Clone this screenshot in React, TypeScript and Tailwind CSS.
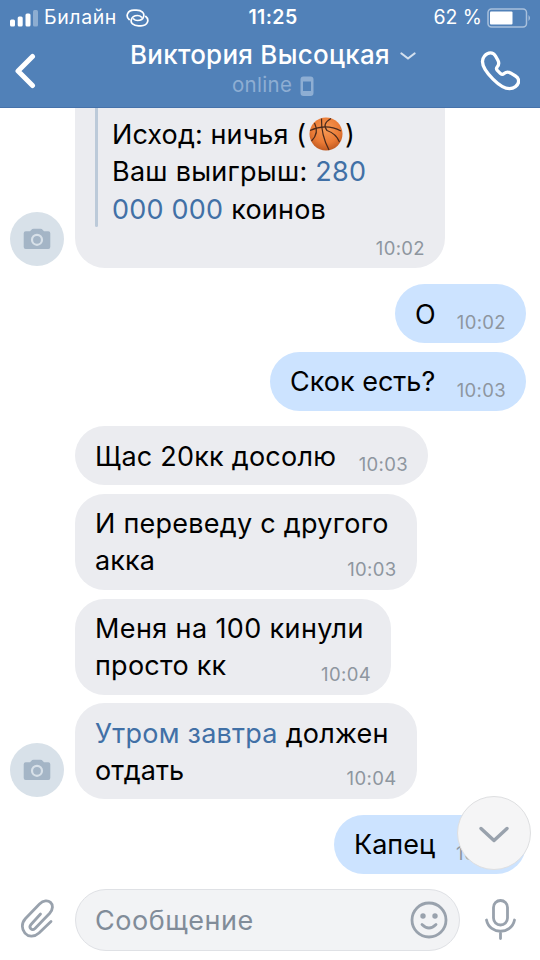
import type { ReactNode } from "react";

type Line = { text: ReactNode; className?: string };

type Message = {
  own?: boolean;
  avatar?: boolean;
  time: string;
  size: string;
  lines: Line[];
};

const messages: Message[] = [
  {
    own: true,
    time: "10:02",
    size: "mt-4 w-[131px] h-[59px]",
    lines: [{ text: "О" }],
  },
  {
    own: true,
    time: "10:03",
    size: "mt-[8.5px] w-[256px] h-[59px]",
    lines: [{ text: "Скок есть?" }],
  },
  {
    time: "10:03",
    size: "mt-[15.5px] w-[353px] h-[59px]",
    lines: [{ text: "Щас 20кк досолю", className: "tracking-[0.22px]" }],
  },
  {
    time: "10:03",
    size: "mt-[8.5px] w-[341.5px] h-[96px]",
    lines: [
      { text: "И переведу с другого", className: "tracking-[0.25px]" },
      { text: "акка", className: "tracking-[0.1px]" },
    ],
  },
  {
    time: "10:04",
    size: "mt-[9px] w-[316px] h-[96px]",
    lines: [
      { text: "Меня на 100 кинули", className: "tracking-[0.38px]" },
      { text: "просто кк", className: "tracking-[0.25px]" },
    ],
  },
  {
    avatar: true,
    time: "10:04",
    size: "mt-[8.5px] w-[341.5px] h-[96px]",
    lines: [
      {
        text: (
          <>
            <Link>Утром завтра</Link> должен
          </>
        ),
        className: "tracking-[0.25px]",
      },
      { text: "отдать" },
    ],
  },
  {
    own: true,
    time: "10:04",
    size: "mt-[15.5px] w-[192px] h-[59px]",
    lines: [{ text: "Капец" }],
  },
];

function Link({ children }: { children: ReactNode }) {
  return <span className="text-[#4170a6]">{children}</span>;
}

function Avatar() {
  return (
    <div className="mb-[2px] ml-[10px] flex h-[54px] w-[54px] shrink-0 items-center justify-center self-end rounded-full bg-[#d8e1e9]">
      <svg width="28" height="22" viewBox="0 0 28 22" className="block">
        <path
          d="M8 2.200Q9 .8 10.500.8h7Q19 .8 20 2.200L21 3.200h4.300Q27.300 3.200 27.300 5.200v13.800q0 2-2 2H2.700Q.7 21 .7 19V5.200q0-2 2-2H7z"
          fill="#a4b5c6"
        />
        <circle cx="14" cy="11.800" r="5" fill="none" stroke="#d8e1e9" strokeWidth="2.200" />
      </svg>
    </div>
  );
}

function Basketball() {
  return (
    <svg width="34" height="34" viewBox="0 0 34 34" className="inline-block align-top">
      <defs>
        <radialGradient id="ball" cx="0.5" cy="0.35" r="0.65">
          <stop offset="0" stopColor="#f79a55" />
          <stop offset="0.65" stopColor="#ea7a35" />
          <stop offset="1" stopColor="#c05a22" />
        </radialGradient>
      </defs>
      <circle cx="17" cy="17" r="16.500" fill="url(#ball)" />
      <g fill="none" stroke="#4a2a1c" strokeWidth="1.200">
        <path d="M1 13.500Q17 6 32 14" />
        <path d="M12.500 1.500Q12 18 20 33" />
        <path d="M22 1.500Q12.500 7 18 13.500Q27 16.500 30.500 25" />
        <path d="M5.500 6Q10.500 16 2.500 24" />
      </g>
    </svg>
  );
}

function Time({ children }: { children: ReactNode }) {
  return (
    <span className="text-[18.5px] leading-[22px] tracking-[0.35px] text-[#8e969f]">{children}</span>
  );
}

function Bubble({ m }: { m: Message }) {
  return (
    <div className={`flex shrink-0 ${m.own ? "justify-end pr-[14px]" : ""}`}>
      {!m.own && (
        <div className="flex w-[75px] shrink-0">{m.avatar && <Avatar />}</div>
      )}
      <div
        className={`flex items-end justify-between rounded-[29.5px] pr-5 pl-5 ${m.size} ${
          m.own ? "bg-[#cce3ff]" : "bg-[#ebecf0]"
        }`}
      >
        <div className="w-0 self-start pt-[11.5px] text-[27px] leading-[37.3px] whitespace-nowrap text-black">
          {m.lines.map((line, i) => (
            <div key={i} className={line.className}>
              {line.text}
            </div>
          ))}
        </div>
        <div className="flex pb-[10px]">
          <Time>{m.time}</Time>
        </div>
      </div>
    </div>
  );
}

function StatusBar() {
  return (
    <div className="grid h-9 grid-cols-3 items-center">
      <div className="flex items-center pl-[10px]">
        <svg width="28" height="17" viewBox="0 0 28 17" fill="#fff">
          <rect x="0" y="9.500" width="5" height="7" rx="1.500" />
          <rect x="7.700" y="6.500" width="5" height="10" rx="1.500" />
          <rect x="15.500" y="3.500" width="5" height="13" rx="1.500" />
          <rect x="23" y="0" width="5" height="16.500" rx="1.500" opacity="0.35" />
        </svg>
        <span className="ml-[6px] text-[19.5px] tracking-[0.6px]">Билайн</span>
        {/* personal hotspot */}
        <svg
          width="23"
          height="18"
          viewBox="0 0 23 18"
          className="ml-[9px]"
          fill="none"
          stroke="#fff"
          strokeWidth="1.700"
          strokeLinecap="round"
        >
          <path d="M3.200 10.500C-.5 7.500 1 1.200 8 1.200h2.500c5.500 0 8 3 7.200 6-.7 2.800-3.200 4.300-6.200 4.300-1.700 0-3-.5-3.800-1.500" />
          <path d="M19.800 7.500C23.500 10.500 22 16.800 15 16.800h-2.500c-5.500 0-8-3-7.200-6 .7-2.800 3.200-4.300 6.200-4.300 1.700 0 3 .5 3.800 1.500" />
        </svg>
      </div>
      <div className="pl-[6px] text-center text-[19.5px] font-semibold tracking-[0.4px]">11:25</div>
      <div className="flex items-center justify-end pr-[8px]">
        <span className="mr-[5px] text-[19.5px] whitespace-nowrap">62 %</span>
        <svg width="45" height="20" viewBox="0 0 45 20">
          <rect
            x="1"
            y="1"
            width="38.500"
            height="18"
            rx="3.500"
            fill="none"
            stroke="#fff"
            strokeOpacity="0.5"
            strokeWidth="1.500"
          />
          <rect x="3" y="3.500" width="22.500" height="13" rx="1" fill="#fff" />
          <path d="M41.500 7q3 3 0 6z" fill="#fff" opacity="0.5" />
        </svg>
      </div>
    </div>
  );
}

function Header() {
  return (
    <header className="h-[108px] shrink-0 border-b border-[#4672aa] bg-[#5181b8] text-white">
      <StatusBar />
      <div className="flex h-[71px]">
        <button type="button" aria-label="Назад" className="flex w-[75px] shrink-0 pt-[17px] pl-[14px]">
          <svg width="24" height="36" viewBox="0 0 24 36" className="block">
            <path
              d="M18.500 3.500L4 18l14.500 14.500"
              fill="none"
              stroke="#fff"
              strokeWidth="5"
              strokeLinecap="round"
              strokeLinejoin="round"
            />
          </svg>
        </button>
        <div className="flex flex-1 flex-col">
          <div className="flex h-9 items-center pl-[55px]">
            <span className="w-[260px] text-[26px] font-medium tracking-[0.25px] whitespace-nowrap">
              Виктория Высоцкая
            </span>
            <svg width="16" height="9" viewBox="0 0 16 9" className="mt-[5px] ml-[10px]">
              <path
                d="M1.500 1.500L8 6.500l6.500-5"
                fill="none"
                stroke="#d3e0ee"
                strokeWidth="2.200"
                strokeLinecap="round"
                strokeLinejoin="round"
              />
            </svg>
          </div>
          <div className="flex h-[26px] items-center pl-[157px] text-[#8eaed3]">
            <span className="w-[62px] text-[20.5px] tracking-[0.3px]">online</span>
            <svg width="14" height="21" viewBox="0 0 14 21" className="mt-[2px] ml-[6px]">
              <path
                d="M3.500.5h7q3 0 3 3v13.500q0 3-3 3h-7q-3 0-3-3V3.500q0-3 3-3zM3 5.500v9.500h8V5.500z"
                fill="currentColor"
                fillRule="evenodd"
              />
            </svg>
          </div>
        </div>
        <button type="button" aria-label="Позвонить" className="flex w-[60px] shrink-0 pt-[15px]">
          <svg width="40" height="40" viewBox="0 0 40 40" className="block">
            <path
              d="M4.500 5C8 .8 13 .8 15.500 5L18 9.500c1.500 3 .8 4.500-.7 6.300-1.300 1.500-1.200 2.200 0 3.600l3.200 3.200c1.400 1.200 2.100 1.300 3.600 0 1.800-1.500 3.300-2.200 6.300-.7L35.500 25c4.200 2.500 4.200 7.500 0 10.600-6 4.500-14.500.5-22.500-7.500S-.5 11 4.500 5z"
              fill="none"
              stroke="#fff"
              strokeWidth="3.300"
              strokeLinejoin="round"
            />
          </svg>
        </button>
      </div>
    </header>
  );
}

function ForwardedMessage() {
  return (
    <div className="flex h-[160px] shrink-0">
      <div className="flex w-[75px] shrink-0">
        <Avatar />
      </div>
      <div className="flex h-[160.4px] w-[370px] flex-col rounded-b-[30px] bg-[#ebecf0] pr-5 pl-5">
        <div className="flex">
          <div className="h-[118.5px] w-[3px] shrink-0 rounded-b-full bg-[#bccad9]" />
          <div className="pt-[8.2px] pl-[14px] text-[27px] leading-[37.3px] whitespace-nowrap text-black">
            <div className="flex">
              <span className="w-[197px] tracking-[0.1px]">Исход: ничья (</span>
              <span className="h-[37.3px] pt-px">
                <Basketball />
              </span>
              <span className="ml-[2px]">)</span>
            </div>
            <div className="tracking-[0.26px]">
              Ваш выигрыш: <Link>280</Link>
            </div>
            <div className="tracking-[0.22px]">
              <Link>000 000</Link> коинов
            </div>
          </div>
        </div>
        <div className="mt-auto flex justify-end pb-[9.400px]">
          <Time>10:02</Time>
        </div>
      </div>
    </div>
  );
}

function Composer() {
  return (
    <footer className="flex h-[79px] shrink-0 bg-white pt-2">
      <div className="flex w-[75px] shrink-0 pt-[10px] pl-[20px]">
        <svg width="36" height="42" viewBox="0 0 36 42" className="block">
          <path
            d="M20.500 15L11 25.500c-2.800 3.200 1 6.800 4 4L29.500 14.500C37.500 5.500 27.500-3 19.500 5L5.500 19.500C-3.500 29.500 8.500 43.500 19 34L31 22.500"
            fill="none"
            stroke="#99a2ad"
            strokeWidth="2.800"
            strokeLinecap="round"
            strokeLinejoin="round"
          />
        </svg>
      </div>
      <div className="flex h-[62px] w-[385px] shrink-0 items-center justify-between rounded-full border-[1.500px] border-[#dfe1e5] bg-[#f2f3f5] pr-[11px] pl-[19px]">
        <span className="pt-[2px] text-[27px] tracking-[0.55px] text-[#818c99]">Сообщение</span>
        <svg width="38" height="38" viewBox="0 0 38 38" fill="#99a2ad" className="mb-px">
          <circle cx="19" cy="19" r="17" fill="none" stroke="#99a2ad" strokeWidth="2.800" />
          <circle cx="13" cy="15" r="2.700" />
          <circle cx="25" cy="15" r="2.700" />
          <path
            d="M12 23.500q7 7 14 0"
            fill="none"
            stroke="#99a2ad"
            strokeWidth="2.800"
            strokeLinecap="round"
          />
        </svg>
      </div>
      <div className="flex pt-[9px] pl-[24px]">
        <svg
          width="34"
          height="43"
          viewBox="0 0 34 43"
          fill="none"
          stroke="#99a2ad"
          strokeWidth="2.800"
          strokeLinecap="round"
        >
          <rect x="9.500" y="2.500" width="14" height="24.500" rx="7" />
          <path d="M2.500 22c3 15 25 15 28 0M16.500 34v6.500" />
        </svg>
      </div>
    </footer>
  );
}

export default function App() {
  return (
    <div className="relative flex h-[960px] w-[540px] flex-col overflow-hidden bg-white font-['Inter',sans-serif]">
      <Header />
      <main className="flex min-h-0 flex-1 flex-col">
        <ForwardedMessage />
        {messages.map((m, i) => (
          <Bubble key={i} m={m} />
        ))}
      </main>
      <Composer />
      <button
        type="button"
        aria-label="Вниз"
        className="absolute top-[796px] left-[456.5px] flex h-[74px] w-[74px] items-center justify-center rounded-full border border-[#dedfe1] bg-[#f5f5f6]"
      >
        <svg width="32" height="20" viewBox="0 0 32 20" className="mt-1">
          <path
            d="M3 3.500L16 15.500l13-12"
            fill="none"
            stroke="#99a2ad"
            strokeWidth="3.500"
            strokeLinecap="round"
            strokeLinejoin="round"
          />
        </svg>
      </button>
    </div>
  );
}
